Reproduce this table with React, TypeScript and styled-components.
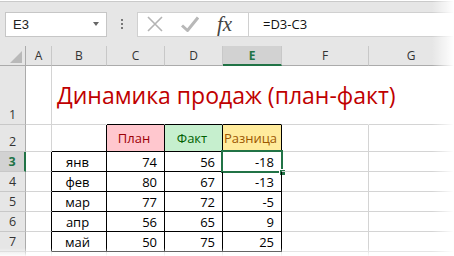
import styled, { createGlobalStyle } from 'styled-components';

const GRID = '#d4d4d4';
const HEAD_BG = '#e6e6e6';
const HEAD_SEL = '#d2d2d2';
const HEAD_LINE = '#ababab';
const GREEN = '#217346';
const INK = '#000';

type Month = { name: string; plan: number; fact: number };

const months: Month[] = [
  { name: 'янв', plan: 74, fact: 56 },
  { name: 'фев', plan: 80, fact: 67 },
  { name: 'мар', plan: 77, fact: 72 },
  { name: 'апр', plan: 56, fact: 65 },
  { name: 'май', plan: 50, fact: 75 },
];

const columns = ['A', 'B', 'C', 'D', 'E', 'F', 'G'];

const GlobalStyle = createGlobalStyle`
  html, body {
    margin: 0;
    padding: 0;
    background: #fff;
  }
  body {
    font-family: "Open Sans", "Noto Sans", sans-serif;
  }
`;

export default function App() {
  return (
    <Window>
      <GlobalStyle />
      <Toolbar>
        <NameBox>
          <span>E3</span>
          <DropArrow />
        </NameBox>
        <Grip>
          <i />
          <i />
          <i />
        </Grip>
        <ActionBox>
          <svg width="16" height="16" viewBox="0 0 16 16">
            <path d="M1 1 L15 15 M15 1 L1 15" stroke="#b4b4b4" strokeWidth="1.6" fill="none" />
          </svg>
          <svg width="18" height="16" viewBox="0 0 18 16">
            <path d="M1 9.5 L6.5 14.5 L17 1.5" stroke="#b8b8b8" strokeWidth="3" fill="none" strokeLinejoin="round" />
          </svg>
          <Fx>fx</Fx>
        </ActionBox>
        <FormulaInput>=D3-C3</FormulaInput>
      </Toolbar>

      <Sheet>
        <Corner>
          <svg width="12" height="12" viewBox="0 0 12 12">
            <polygon points="12,0 12,12 0,12" fill="#b9b9b9" />
          </svg>
        </Corner>
        {columns.map((c) => (
          <ColHead key={c} $sel={c === 'E'}>
            {c}
          </ColHead>
        ))}

        {/* row 1: title spills over B..G, so those gridlines are hidden */}
        <RowHead>1</RowHead>
        <Cell />
        <Cell $right="transparent" $v="center">
          <Title>Динамика продаж (план-факт)</Title>
        </Cell>
        <Cell $right="transparent" $bottom={INK} />
        <Cell $right="transparent" $bottom={INK} />
        <Cell $right="transparent" $bottom={INK} />
        <Cell $right="transparent" />
        <Cell />

        {/* row 2: table headings */}
        <RowHead>2</RowHead>
        <Cell />
        <Cell $right={INK} $bottom={INK} />
        <Cell $right={INK} $bottom={INK} $align="center" $v="center" $bg="#ffc7ce" $color="#9c0006">
          План
        </Cell>
        <Cell $right={INK} $bottom={INK} $align="center" $v="center" $bg="#c6efce" $color="#006100">
          Факт
        </Cell>
        <Cell $right={INK} $bottom={INK} $align="center" $v="center" $bg="#ffeb9c" $color="#9c5700">
          Разница
        </Cell>
        <Cell />
        <Cell />

        {months.map((m, i) => (
          <Row key={m.name} month={m} index={i + 3} />
        ))}

        {/* next row, only its top edge shows */}
        <RowHead />
        {columns.map((c) => (
          <Cell key={c} />
        ))}
      </Sheet>
      <EdgeFade />
    </Window>
  );
}

function Row({ month, index }: { month: Month; index: number }) {
  const active = index === 3;
  return (
    <>
      <RowHead $sel={active}>{index}</RowHead>
      <Cell $right={INK} />
      <Cell $right={INK} $bottom={INK} $align="center">
        {month.name}
      </Cell>
      <Cell $right={INK} $bottom={INK} $align="right">
        {month.plan}
      </Cell>
      <Cell $right={INK} $bottom={INK} $align="right">
        {month.fact}
      </Cell>
      <Cell $right={INK} $bottom={INK} $align="right">
        {month.fact - month.plan}
        {active && (
          <Selection>
            <FillHandle />
          </Selection>
        )}
      </Cell>
      <Cell />
      <Cell />
    </>
  );
}

const Window = styled.div`
  position: relative;
  width: 454px;
  height: 256px;
  overflow: hidden;
  background: #fff;
`;

const Toolbar = styled.div`
  display: flex;
  align-items: center;
  height: 45px;
  margin-top: 1px;
  border-top: 1px solid #cacaca;
  padding-left: 5px;
  background: ${HEAD_BG};
  box-sizing: border-box;
`;

const NameBox = styled.div`
  box-sizing: border-box;
  display: flex;
  align-items: center;
  justify-content: space-between;
  width: 102px;
  height: 25px;
  padding: 0 7px 0 7px;
  background: #fff;
  border: 1px solid #c6c6c6;
  font-family: "Liberation Sans", Arial, sans-serif;
  font-size: 13px;
  color: #222;
`;

const DropArrow = styled.span`
  width: 0;
  height: 0;
  border-left: 3.5px solid transparent;
  border-right: 3.5px solid transparent;
  border-top: 4px solid #666;
`;

const Grip = styled.div`
  display: flex;
  flex-direction: column;
  gap: 2px;
  width: 30px;
  align-items: center;

  i {
    display: block;
    width: 2px;
    height: 2px;
    background: #777;
  }
`;

const ActionBox = styled.div`
  box-sizing: border-box;
  display: flex;
  align-items: center;
  gap: 18px;
  width: 112px;
  height: 25px;
  padding-left: 9px;
  background: #fff;
  border: 1px solid #d0d0d0;
`;

const Fx = styled.span`
  font-family: "Liberation Serif", "Times New Roman", serif;
  font-style: italic;
  font-size: 21px;
  line-height: 1;
  color: #444;
`;

const FormulaInput = styled.div`
  box-sizing: border-box;
  flex: 1;
  display: flex;
  align-items: center;
  height: 25px;
  margin-left: -1px;
  padding-left: 14px;
  background: #fff;
  border: 1px solid #d0d0d0;
  font-size: 13px;
  color: #111;
`;

const Sheet = styled.div`
  display: grid;
  grid-template-columns: 26px 26px 55px 58px 58px 59px 87px 85px;
  grid-template-rows: 20px 59px 27px repeat(6, 20px);
  font-size: 13px;
`;

const Corner = styled.div`
  box-sizing: border-box;
  display: flex;
  align-items: flex-end;
  justify-content: flex-end;
  padding: 0 3px 2px 0;
  background: ${HEAD_BG};
  border-right: 1px solid ${HEAD_LINE};
  border-bottom: 1px solid ${HEAD_LINE};
`;

const ColHead = styled.div<{ $sel?: boolean }>`
  box-sizing: border-box;
  display: flex;
  align-items: center;
  justify-content: center;
  background: ${(p) => (p.$sel ? HEAD_SEL : HEAD_BG)};
  border-right: 1px solid #c8c8c8;
  border-bottom: ${(p) => (p.$sel ? `2px solid ${GREEN}` : `1px solid ${HEAD_LINE}`)};
  color: ${(p) => (p.$sel ? GREEN : '#333')};
  font-weight: ${(p) => (p.$sel ? 700 : 400)};
  font-size: 12px;
`;

const RowHead = styled.div<{ $sel?: boolean }>`
  box-sizing: border-box;
  display: flex;
  align-items: flex-end;
  justify-content: center;
  background: ${(p) => (p.$sel ? HEAD_SEL : HEAD_BG)};
  border-right: ${(p) => (p.$sel ? `2px solid ${GREEN}` : `1px solid ${HEAD_LINE}`)};
  border-bottom: 1px solid #c8c8c8;
  color: ${(p) => (p.$sel ? GREEN : '#333')};
  font-weight: ${(p) => (p.$sel ? 700 : 400)};
  font-size: 12.5px;
  line-height: 17px;
  padding-bottom: 1px;
`;

type CellProps = {
  $right?: string;
  $bottom?: string;
  $bg?: string;
  $color?: string;
  $align?: 'left' | 'center' | 'right';
  $v?: 'center' | 'end';
};

const Cell = styled.div<CellProps>`
  box-sizing: border-box;
  position: relative;
  display: flex;
  align-items: ${(p) => (p.$v === 'center' ? 'center' : 'flex-end')};
  justify-content: ${(p) =>
    p.$align === 'right' ? 'flex-end' : p.$align === 'center' ? 'center' : 'flex-start'};
  padding: 0 7px 0 4px;
  border-right: 1px solid ${(p) => p.$right ?? GRID};
  border-bottom: 1px solid ${(p) => p.$bottom ?? GRID};
  background: ${(p) => p.$bg ?? 'transparent'};
  color: ${(p) => p.$color ?? INK};
  white-space: nowrap;
`;

const Title = styled.span`
  font-size: 23px;
  color: #c00000;
  margin-left: 1px;
`;

const Selection = styled.div`
  position: absolute;
  top: -2px;
  left: -2px;
  right: -2px;
  bottom: -2px;
  border: 2px solid ${GREEN};
  pointer-events: none;
`;

const FillHandle = styled.div`
  position: absolute;
  right: -5px;
  bottom: -5px;
  width: 5px;
  height: 5px;
  background: ${GREEN};
  border: 1px solid #fff;
`;

const EdgeFade = styled.div`
  position: absolute;
  inset: 0;
  pointer-events: none;
  background:
    linear-gradient(to right, rgba(255, 255, 255, 0) 432px, #fff 454px),
    linear-gradient(to bottom, rgba(255, 255, 255, 0) 248px, rgba(255, 255, 255, 0.9) 256px);
`;
